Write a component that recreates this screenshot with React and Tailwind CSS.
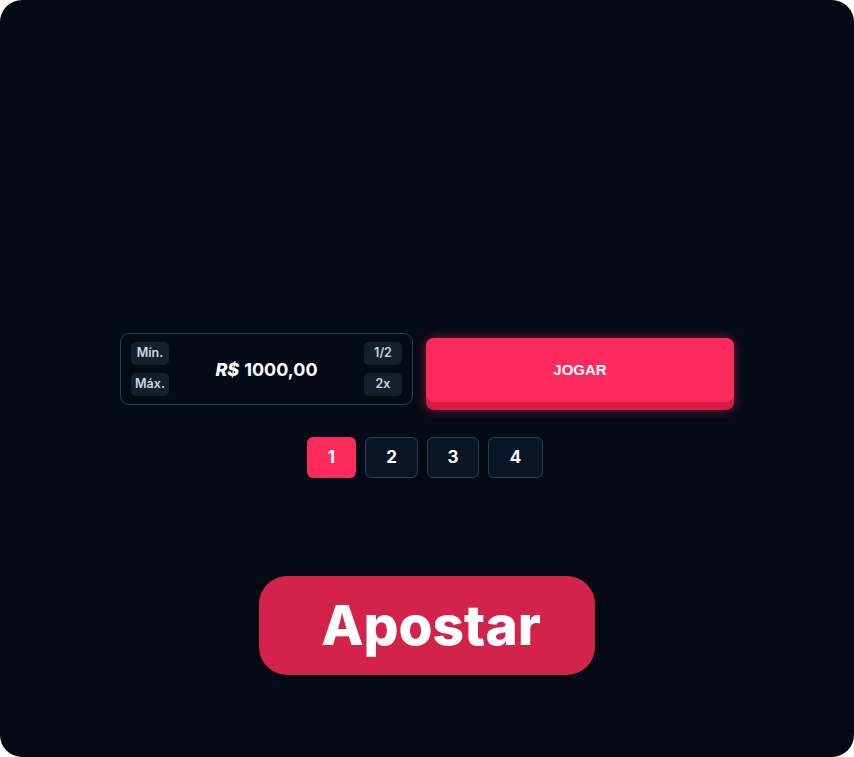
import { useState } from 'react'

const amounts = [
  { n: '1', w: 'w-[49px]' },
  { n: '2', w: 'w-[53px]' },
  { n: '3', w: 'w-[52px]' },
  { n: '4', w: 'w-[55px]' },
]

function Pill({ children }) {
  return (
    <button className="h-[23px] w-[38px] rounded-[5px] bg-[#151f2e] text-[12.5px] font-semibold text-[#cfd7e2] flex items-center justify-center">
      {children}
    </button>
  )
}

export default function App() {
  const [page, setPage] = useState('1')

  return (
    <div className="w-[854px] h-[757px] bg-white" style={{ fontFamily: 'Inter, "Open Sans", sans-serif' }}>
      <div className="w-full h-full rounded-[22px] bg-[#040a14] flex flex-col items-center">
        <div className="mt-[320px] w-[636px] flex flex-col items-center bg-[#050b16] pt-[13px] pb-[12px]">
          <div className="flex items-start gap-[13px]">
            {/* bet amount */}
            <div className="w-[293px] h-[72px] rounded-[9px] border border-[#2b3b50] flex items-center justify-between px-[10px]">
              <div className="flex flex-col gap-[8px]">
                <Pill>Mín.</Pill>
                <Pill>Máx.</Pill>
              </div>
              <div className="text-white text-[18px] font-bold flex items-center gap-[5px]">
                <span className="italic font-extrabold">R$</span>
                <span>1000,00</span>
              </div>
              <div className="flex flex-col gap-[8px]">
                <Pill>1/2</Pill>
                <Pill>2x</Pill>
              </div>
            </div>

            {/* play */}
            <button className="mt-[5px] w-[308px] h-[72px] rounded-[8px] bg-[#d81b45] pb-[8px] shadow-[0_0_12px_rgba(255,42,92,0.45)]">
              <div
                className="h-[64px] rounded-[8px] bg-[#ff2a5c] flex items-center justify-center text-white text-[15px] font-bold"
                style={{ fontFamily: '"Liberation Sans", Arial, sans-serif' }}
              >
                JOGAR
              </div>
            </button>
          </div>

          <div className="mt-[27px] mr-[4px] flex gap-[9px]">
            {amounts.map((a) => (
              <button
                key={a.n}
                onClick={() => setPage(a.n)}
                className={
                  page === a.n
                    ? `h-[41px] ${a.w} rounded-[6px] bg-[#ff2a5c] text-white text-[17px] font-bold`
                    : `h-[41px] ${a.w} rounded-[6px] bg-[#0a1626] border border-[#2c3e52] text-white text-[17px] font-bold`
                }
              >
                {a.n}
              </button>
            ))}
          </div>
        </div>

        <button className="mt-[86px] w-[336px] h-[99px] rounded-[28px] bg-[#d4234a] text-white text-[55px] font-extrabold pl-[8px] flex items-center justify-center">
          Apostar
        </button>
      </div>
    </div>
  )
}
